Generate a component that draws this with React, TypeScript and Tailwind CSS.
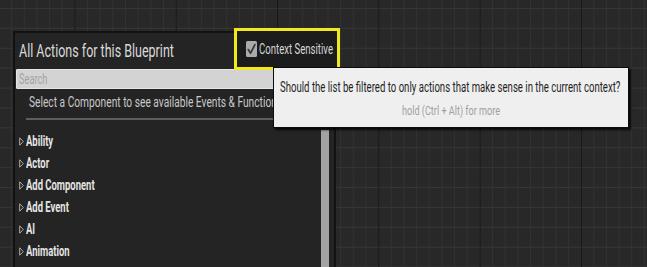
import React from "react";

const categories = ["Ability", "Actor", "Add Component", "Add Event", "AI", "Animation"];

// Editor text is a tall, narrow face: squeeze Roboto horizontally
function Narrow({ children, className = "" }: { children: React.ReactNode; className?: string }) {
  return <span className={`inline-block whitespace-nowrap origin-left leading-none ${className}`}>{children}</span>;
}

function Caret() {
  return (
    <svg width="5" height="9" viewBox="0 0 5 9" className="shrink-0">
      <path d="M0.7 0.8 L4.3 4.5 L0.7 8.2 Z" fill="none" stroke="#bdbdbd" strokeWidth="0.9" />
    </svg>
  );
}

function CheckBox() {
  return (
    <svg width="11" height="16" viewBox="0 0 11 16" className="shrink-0">
      <rect x="0" y="0" width="11" height="16" rx="1.5" fill="#ababab" />
      <path d="M2.3 8.6 L4.6 12.2 L8.9 3.6" fill="none" stroke="#3a3a3a" strokeWidth="1.8" strokeLinecap="round" strokeLinejoin="round" />
    </svg>
  );
}

export default function App() {
  return (
    <div
      className="relative w-[647px] h-[267px] overflow-hidden bg-[#282828] bg-[image:linear-gradient(to_right,#161616_1px,transparent_1px),linear-gradient(to_right,#323232_1px,transparent_1px),linear-gradient(to_bottom,#363636_1px,transparent_1px)] bg-[length:101.3px_100%,12.66px_100%,100%_19.9px] bg-[position:74.4px_0,11.1px_0,0_8px] pt-[31px] pl-[13px]"
      style={{ fontFamily: "Roboto, 'Liberation Sans', sans-serif" }}
    >
      {/* action menu window */}
      <div className="relative w-[323px] h-[260px] border-2 border-[#121212] bg-[#242424] flex flex-col">
        <div className="h-[36px] pl-[4px] flex items-center">
          <Narrow className="text-[18px] text-[#dadada] scale-x-[0.695]">All Actions for this Blueprint</Narrow>
        </div>

        <div className="mx-[1px] h-[20px] bg-[#d3d3d3] border border-[#e6e6e6] rounded-[1px] flex items-center pl-[2px]">
          <Narrow className="text-[14px] text-[#a3a3a3] scale-x-[0.66]">Search</Narrow>
        </div>

        <div className="h-[26px] pl-[14px] flex items-center overflow-hidden">
          <Narrow className="text-[15px] text-[#c9c9c9] scale-x-[0.68]">Select a Component to see available Events &amp; Functions</Narrow>
        </div>

        <div className="ml-[11px] mr-[12px] mt-[3px] h-[2px] bg-[#5e5e5e]" />

        <div className="flex flex-1 mt-[10px]">
          <div className="flex-1 flex flex-col pl-[4px]">
            {categories.map((c) => (
              <div key={c} className="h-[22px] flex items-center gap-[2px]">
                <Caret />
                <Narrow className="text-[15px] font-bold text-[#e4e4e4] scale-x-[0.63]">{c}</Narrow>
              </div>
            ))}
          </div>
          <div className="w-[8px] bg-[#a3a3a3] mr-[5px]" />
        </div>

        {/* highlighted toggle */}
        <div className="absolute left-[219px] top-[-5px] w-[106px] h-[42px] border-[3px] border-[#f2e81e] bg-[#1c1c1c] flex items-center pl-[9px] gap-[2px]">
          <CheckBox />
          <Narrow className="text-[14px] text-[#d6d6d6] scale-x-[0.685]">Context Sensitive</Narrow>
        </div>
      </div>

      {/* tooltip */}
      <div className="absolute left-[273px] top-[67px] w-[356px] h-[61px] bg-[#efefef] border border-[#0c0c0c] shadow-[2px_2px_2px_rgba(0,0,0,0.8)] flex flex-col">
        <div className="pl-[6px] pt-[7px]">
          <Narrow className="text-[15px] text-[#1f1f1f] scale-x-[0.64]">Should the list be filtered to only actions that make sense in the current context?</Narrow>
        </div>
        <div className="mt-[5px] flex justify-center">
          <span className="inline-block whitespace-nowrap origin-center scale-x-[0.7] text-[13px] text-[#a0a0a0] leading-none">hold (Ctrl + Alt) for more</span>
        </div>
      </div>
    </div>
  );
}
